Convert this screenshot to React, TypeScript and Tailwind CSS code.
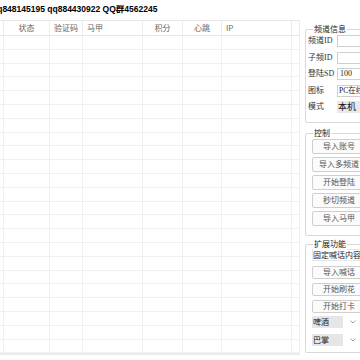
import React from "react";

const gridCols = "grid grid-cols-[4px_46px_33px_60px_40px_39px_70px_8px]";

const headers: { t: string; a: string }[] = [
  { t: "", a: "justify-center" },
  { t: "状态", a: "justify-center" },
  { t: "验证码", a: "justify-center" },
  { t: "马甲", a: "justify-start pl-[4px]" },
  { t: "积分", a: "justify-center" },
  { t: "心跳", a: "justify-center" },
  { t: "IP", a: "justify-start pl-[4px]" },
  { t: "", a: "justify-center" },
];

function Btn({ label, h }: { label: string; h: string }) {
  return (
    <div
      className={`${h} w-[54px] shrink-0 border border-[#cfcfcf] rounded-[2px] bg-[#fbfbfb] flex items-center justify-center text-[8px] text-[#555] whitespace-nowrap overflow-hidden`}
    >
      {label}
    </div>
  );
}

function Row({ label, children }: { label: string; children?: React.ReactNode }) {
  return (
    <div className="h-[16.5px] flex items-center">
      <div className="w-[31px] shrink-0 pl-[2px] text-[8px] text-[#333] whitespace-nowrap">{label}</div>
      {children}
    </div>
  );
}

export default function App() {
  const rows = Array.from({ length: 23 });
  return (
    <div
      className="w-[360px] h-[360px] overflow-hidden bg-white flex flex-col"
      style={{ fontFamily: '"Liberation Sans", "Noto Sans CJK SC", sans-serif' }}
    >
      <div className="h-[20px] shrink-0 overflow-hidden">
        <div className="ml-[-8px] pt-[3px] text-[8.5px] leading-[12px] font-bold text-black whitespace-nowrap">
          qq848145195 qq884430922 QQ群4562245
        </div>
      </div>
      <div className="flex flex-1 min-h-0">
        <div className="w-[300px] shrink-0 flex flex-col">
          <div className={`${gridCols} h-[16px] border-t border-b border-[#e6e6e6]`}>
            {headers.map((h, i) => (
              <div
                key={i}
                className={`flex items-center ${h.a} border-r border-[#ececec] text-[8px] text-[#666] whitespace-nowrap`}
                style={{ fontFamily: '"Noto Sans CJK SC", sans-serif' }}
              >
                {h.t}
              </div>
            ))}
          </div>
          {rows.map((_, r) => (
            <div key={r} className={`${gridCols} h-[13.8px] border-b border-[#f0f0f0]`}>
              {headers.map((_, i) => (
                <div key={i} className="border-r border-[#f0f0f0]" />
              ))}
            </div>
          ))}
          <div className="h-[2px] bg-[#ececec]" />
        </div>
        <div
          className="w-[60px] shrink-0 overflow-hidden flex flex-col items-start"
          style={{ fontFamily: '"Liberation Serif", "Noto Sans CJK SC", serif' }}
        >
          <div className="w-[80px] min-w-[80px] shrink-0 ml-[5px] flex flex-col">
            {/* group 1 */}
            <div className="relative mt-[9px] border border-[#d9d9d9] rounded-[2px] pt-[3px] pb-[6px]">
              <span
                className="absolute top-[-7px] left-[7px] bg-white px-[1px] text-[8px] leading-[12px] text-[#222]"
                style={{ fontFamily: '"Noto Sans CJK SC", sans-serif' }}
              >
                频道信息
              </span>
              <Row label="频道ID">
                <div className="h-[12px] flex-1 border border-[#cfcfcf] bg-white" />
              </Row>
              <Row label="子频ID">
                <div className="h-[12px] flex-1 border border-[#cfcfcf] bg-white" />
              </Row>
              <Row label="登陆SD">
                <div className="h-[12px] flex-1 border border-[#cfcfcf] bg-white text-[8px] leading-[10px] pl-[2px] text-[#222]">
                  100
                </div>
              </Row>
              <Row label="图标">
                <div className="h-[12px] flex-1 border border-[#cfcfcf] bg-white text-[7.5px] leading-[10px] pl-[1px] text-[#222] whitespace-nowrap">
                  PC在线
                </div>
              </Row>
              <Row label="模式">
                <div
                  className="h-[12px] flex-1 bg-[#e9e9e9] text-[9px] leading-[12px] pl-[1px] text-[#111] whitespace-nowrap"
                  style={{ fontFamily: '"Noto Sans CJK SC", sans-serif' }}
                >
                  本机
                </div>
              </Row>
            </div>
            {/* group 2 */}
            <div
              className="relative mt-[10px] border border-[#d9d9d9] rounded-[2px] pt-[5px] pb-[9px] pl-[6px] flex flex-col gap-[3px]"
              style={{ fontFamily: '"Noto Sans CJK SC", sans-serif' }}
            >
              <span className="absolute top-[-7px] left-[7px] bg-white px-[1px] text-[8px] leading-[12px] text-[#222]">
                控制
              </span>
              <Btn label="导入账号" h="h-[15px]" />
              <Btn label="导入多频道" h="h-[15px]" />
              <Btn label="开始登陆" h="h-[15px]" />
              <Btn label="秒切频道" h="h-[15px]" />
              <Btn label="导入马甲" h="h-[15px]" />
            </div>
            {/* group 3 */}
            <div
              className="relative mt-[8px] border border-[#d9d9d9] rounded-[2px] pt-[4px] pb-[6px] pl-[6px] flex flex-col"
              style={{ fontFamily: '"Noto Sans CJK SC", sans-serif' }}
            >
              <span className="absolute top-[-7px] left-[7px] bg-white px-[1px] text-[8px] leading-[12px] text-[#222]">
                扩展功能
              </span>
              <div className="h-[12px] w-[70px] border border-[#e6e6e6] bg-white text-[8px] leading-[10px] text-[#222] whitespace-nowrap overflow-hidden">
                固定喊话内容
              </div>
              <div className="mt-[5px] flex flex-col gap-[4px]">
                <Btn label="导入喊话" h="h-[13px]" />
                <Btn label="开始刷花" h="h-[13px]" />
                <Btn label="开始打卡" h="h-[13px]" />
              </div>
              <div className="mt-[3px] h-[12px] flex items-center">
                <div className="w-[31px] h-[12px] bg-[#e6e6e6] text-[8px] leading-[12px] text-[#222] pl-[1px]">啤酒</div>
                <svg className="ml-[7px]" width="6" height="4" viewBox="0 0 6 4">
                  <path d="M0.5 0.5 L3 3 L5.5 0.5" fill="none" stroke="#888" strokeWidth="0.8" />
                </svg>
              </div>
              <div className="mt-[6px] h-[12px] flex items-center">
                <div className="w-[31px] h-[12px] bg-[#e6e6e6] text-[8px] leading-[12px] text-[#222] pl-[1px]">巴掌</div>
                <svg className="ml-[7px]" width="6" height="4" viewBox="0 0 6 4">
                  <path d="M0.5 0.5 L3 3 L5.5 0.5" fill="none" stroke="#888" strokeWidth="0.8" />
                </svg>
              </div>
            </div>
          </div>
        </div>
      </div>
    </div>
  );
}
